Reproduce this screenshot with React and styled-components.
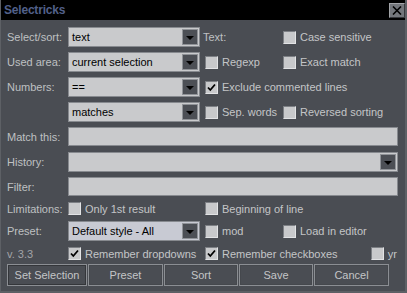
import React from 'react';
import styled, { createGlobalStyle } from 'styled-components';

const Global = createGlobalStyle`
  html, body { margin: 0; padding: 0; background: #4a4d53; }
  body { font-family: "Liberation Sans", Arial, sans-serif; }
`;

const Window = styled.div`
  width: 407px;
  height: 293px;
  box-sizing: border-box;
  background: #4a4d53;
  border-left: 1px solid #5d6065;
  border-right: 2px solid #5d6065;
  border-bottom: 2px solid #5d6065;
  display: flex;
  flex-direction: column;
  overflow: hidden;
`;

const TitleBar = styled.div`
  height: 20px;
  background: #000;
  display: flex;
  align-items: center;
  justify-content: space-between;
  padding: 0 2px 0 4px;
  box-sizing: border-box;
  margin-left: -1px;
  margin-right: -2px;
`;

const Title = styled.span`
  font-size: 12px;
  font-weight: bold;
  color: #52618a;
  letter-spacing: -0.2px;
`;

const CloseButton = styled.div`
  width: 16px;
  height: 15px;
  box-sizing: border-box;
  background: #74777c;
  border: 1px solid;
  border-color: #a2a4a8 #36383c #36383c #a2a4a8;
  display: flex;
  align-items: center;
  justify-content: center;
  margin-top: 1px;
`;

const Body = styled.div`
  display: flex;
  flex-direction: column;
  padding: 7px 7px 0 6px;
`;

const Row = styled.div`
  display: grid;
  grid-template-columns: 61px 132px 5px 78px 1fr;
  align-items: center;
  height: ${p => p.$h}px;
  margin-top: ${p => p.$mt || 0}px;
`;

const Label = styled.span`
  font-size: 11px;
  color: ${p => (p.$dim ? '#a2a4a8' : '#bfc0c2')};
  white-space: nowrap;
  grid-column: ${p => p.$col || 'auto'};
  margin-left: ${p => p.$ml || 0}px;
`;

const ComboBox = styled.div`
  grid-column: ${p => (p.$wide ? '2 / -1' : '2')};
  height: 20px;
  box-sizing: border-box;
  border: 1px solid #878a8f;
  background: ${p => (p.$focus ? '#c8cad3' : '#c9cacc')};
  display: flex;
  align-items: center;
  padding: 1px;
`;

const ComboText = styled.span`
  flex: 1;
  font-size: 11px;
  color: #000;
  padding-left: 2px;
  white-space: nowrap;
  overflow: hidden;
`;

const DropButton = styled.span`
  width: 16px;
  height: 16px;
  box-sizing: border-box;
  background: #4c4f55;
  border: 1px solid #8f9297;
  display: flex;
  align-items: center;
  justify-content: center;
`;

const Arrow = styled.span`
  width: 0;
  height: 0;
  border-left: 4px solid transparent;
  border-right: 4px solid transparent;
  border-top: 4px solid #000;
  margin-top: 1px;
`;

const TextField = styled.div`
  grid-column: 2 / -1;
  height: 19px;
  box-sizing: border-box;
  border: 1px solid #878a8f;
  background: #c9cacc;
`;

const CheckItem = styled.label`
  grid-column: ${p => p.$col};
  grid-row: 1;
  justify-self: ${p => (p.$end ? 'end' : 'start')};
  display: flex;
  align-items: center;
  gap: 3px;
  font-size: 11px;
  color: #c4c5c7;
  white-space: nowrap;
  margin-right: ${p => p.$mr || 0}px;
`;

const Box = styled.span`
  width: 13px;
  height: 13px;
  flex: none;
  box-sizing: border-box;
  background: #c8c9cb;
  border: 1px solid;
  border-color: #7c7f84 #e2e3e5 #e2e3e5 #7c7f84;
  display: flex;
  align-items: center;
  justify-content: center;
  margin-right: 1px;
`;

const ButtonBar = styled.div`
  display: flex;
  gap: 1px;
  margin-top: 1px;
`;

const Button = styled.div`
  width: ${p => p.$w}px;
  height: 22px;
  box-sizing: border-box;
  border: 1px solid #8b8e93;
  box-shadow: ${p => (p.$default ? 'inset 0 0 0 1px #34363a' : 'inset 0 0 0 1px #45484d')};
  display: flex;
  align-items: center;
  justify-content: center;
  font-size: 11px;
  color: #c4c5c7;
`;

const Check = ({ checked }) => (
  <Box>
    {checked && (
      <svg width="9" height="9" viewBox="0 0 9 9">
        <path d="M1 4.5 L3.3 7 L8 1.5" stroke="#000" strokeWidth="1.8" fill="none" />
      </svg>
    )}
  </Box>
);

const CheckBox = ({ col, checked, children, end, mr }) => (
  <CheckItem $col={col} $end={end} $mr={mr}>
    <Check checked={checked} />
    {children}
  </CheckItem>
);

const Combo = ({ value, wide, focus }) => (
  <ComboBox $wide={wide} $focus={focus}>
    <ComboText>{value}</ComboText>
    <DropButton>
      <Arrow />
    </DropButton>
  </ComboBox>
);

export default function App() {
  return (
    <>
      <Global />
      <Window>
        <TitleBar>
          <Title>Selectricks</Title>
          <CloseButton>
            <svg width="10" height="9" viewBox="0 0 10 9">
              <path d="M1 0.5 L9 8.5 M9 0.5 L1 8.5" stroke="#000" strokeWidth="1.6" />
            </svg>
          </CloseButton>
        </TitleBar>
        <Body>
          <Row $h={20}>
            <Label>Select/sort:</Label>
            <Combo value="text" />
            <Label $col="4" $ml={-2}>Text:</Label>
            <CheckBox col="5">Case sensitive</CheckBox>
          </Row>
          <Row $h={20} $mt={5}>
            <Label>Used area:</Label>
            <Combo value="current selection" />
            <CheckBox col="4">Regexp</CheckBox>
            <CheckBox col="5">Exact match</CheckBox>
          </Row>
          <Row $h={20} $mt={5}>
            <Label>Numbers:</Label>
            <Combo value="==" />
            <CheckBox col="4 / -1" checked>Exclude commented lines</CheckBox>
          </Row>
          <Row $h={20} $mt={5}>
            <span />
            <Combo value="matches" />
            <CheckBox col="4">Sep. words</CheckBox>
            <CheckBox col="5">Reversed sorting</CheckBox>
          </Row>
          <Row $h={19} $mt={5}>
            <Label>Match this:</Label>
            <TextField />
          </Row>
          <Row $h={20} $mt={6}>
            <Label>History:</Label>
            <Combo value="" wide />
          </Row>
          <Row $h={19} $mt={5}>
            <Label>Filter:</Label>
            <TextField />
          </Row>
          <Row $h={19} $mt={3}>
            <Label>Limitations:</Label>
            <CheckBox col="2">Only 1st result</CheckBox>
            <CheckBox col="4 / -1">Beginning of line</CheckBox>
          </Row>
          <Row $h={20} $mt={3}>
            <Label>Preset:</Label>
            <Combo value="Default style - All" focus />
            <CheckBox col="4">mod</CheckBox>
            <CheckBox col="5">Load in editor</CheckBox>
          </Row>
          <Row $h={19} $mt={3}>
            <Label $dim>v. 3.3</Label>
            <CheckBox col="2" checked>Remember dropdowns</CheckBox>
            <CheckBox col="4" checked>Remember checkboxes</CheckBox>
            <CheckBox col="5" end mr={1}>yr</CheckBox>
          </Row>
          <ButtonBar>
            <Button $w={80} $default>Set Selection</Button>
            <Button $w={75}>Preset</Button>
            <Button $w={74}>Sort</Button>
            <Button $w={74}>Save</Button>
            <Button $w={75}>Cancel</Button>
          </ButtonBar>
        </Body>
      </Window>
    </>
  );
}
